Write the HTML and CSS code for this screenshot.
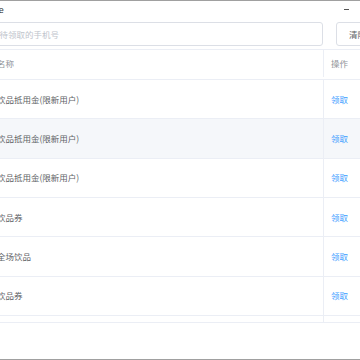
FILE: index.html
```html
<!DOCTYPE html>
<html lang="zh-CN">
<head>
<meta charset="UTF-8">
<title>领取优惠券</title>
<link rel="stylesheet" href="styles.css">
</head>
<body>
<div class="window">
    <div class="titlebar">
        <span class="title">Title</span>
        <div class="controls">
            <span class="ctl-min"></span>
            <span class="ctl-max"></span>
            <span class="ctl-close">×</span>
        </div>
    </div>

    <div class="toolbar">
        <input type="text" class="phone-input" placeholder="请输入待领取的手机号">
        <button class="clear-btn">清除</button>
    </div>

    <div class="table">
        <div class="row head">
            <div class="cell name">名称</div>
            <div class="cell op">操作</div>
        </div>
        <div class="body">
            <div class="row">
                <div class="cell name">饮品抵用金(限新用户)</div>
                <div class="cell op"><a href="#">领取</a></div>
            </div>
            <div class="row hover">
                <div class="cell name">饮品抵用金(限新用户)</div>
                <div class="cell op"><a href="#">领取</a></div>
            </div>
            <div class="row">
                <div class="cell name">饮品抵用金(限新用户)</div>
                <div class="cell op"><a href="#">领取</a></div>
            </div>
            <div class="row">
                <div class="cell name">饮品券</div>
                <div class="cell op"><a href="#">领取</a></div>
            </div>
            <div class="row">
                <div class="cell name">全场饮品</div>
                <div class="cell op"><a href="#">领取</a></div>
            </div>
            <div class="row">
                <div class="cell name">饮品券</div>
                <div class="cell op"><a href="#">领取</a></div>
            </div>
            <div class="row">
                <div class="cell name">饮品抵用金</div>
                <div class="cell op"><a href="#">领取</a></div>
            </div>
        </div>
    </div>
</div>
</body>
</html>
```

FILE: styles.css
```css
html, body {
    margin: 0;
    padding: 0;
    background: #fff;
    overflow: hidden;
}
body {
    width: 360px;
    height: 360px;
    font-family: "Noto Sans CJK SC", "Liberation Sans", sans-serif;
    font-size: 8.5px;
    color: #606266;
}
.window {
    box-sizing: border-box;
    width: 468px;
    height: 360px;
    margin-left: -56px;
    padding: 0 16px;
    border-top: 1px solid #a0a0a0;
    border-bottom: 1px solid #a0a0a0;
    background: #fff;
}
.titlebar {
    display: flex;
    align-items: center;
    height: 17px;
    padding-left: 27px;
}
.title {
    font-family: "Liberation Sans", sans-serif;
    font-size: 9px;
    color: #303133;
}
.controls {
    margin-left: auto;
    display: flex;
    align-items: center;
    gap: 14px;
}
.ctl-min {
    width: 5px;
    height: 1px;
    background: #555;
}
.ctl-max {
    width: 7px;
    height: 7px;
    border: 1px solid #555;
    box-sizing: border-box;
}
.ctl-close {
    font-size: 12px;
    line-height: 1;
    color: #555;
}
.toolbar {
    display: flex;
    gap: 13px;
    margin-top: 4px;
    height: 24px;
}
.phone-input {
    flex: 1;
    box-sizing: border-box;
    height: 24px;
    padding: 0 13px;
    border: 1px solid #dcdfe6;
    border-radius: 3px;
    font-family: inherit;
    font-size: 8.5px;
    color: #606266;
    outline: none;
}
.phone-input::placeholder {
    color: #c0c4cc;
}
.clear-btn {
    width: 60px;
    height: 24px;
    padding: 0 0 0 12px;
    text-align: left;
    border: 1px solid #dcdfe6;
    border-radius: 3px;
    background: #fff;
    font-family: inherit;
    font-size: 8.5px;
    color: #606266;
}
.table {
    margin-top: 3px;
    border-top: 1px solid #ebeef5;
}
.row {
    display: flex;
    box-sizing: border-box;
    height: 39.33px;
    border-bottom: 1px solid #ebeef5;
}
.row.head {
    height: 30px;
    padding-bottom: 2px;
    color: #909399;
}
.row.hover {
    background: #f5f7fa;
}
.cell {
    display: flex;
    align-items: center;
    box-sizing: border-box;
    padding-left: 37px;
    padding-bottom: 1px;
}
.cell.name {
    flex: 1;
    white-space: nowrap;
}
.cell.op {
    width: 73px;
    padding-left: 7px;
    border-left: 1px solid #ebeef5;
}
.cell a {
    color: #409eff;
    text-decoration: none;
}
.body {
    height: 242px;
    overflow: hidden;
    border-bottom: 1px solid #ebeef5;
}
```
